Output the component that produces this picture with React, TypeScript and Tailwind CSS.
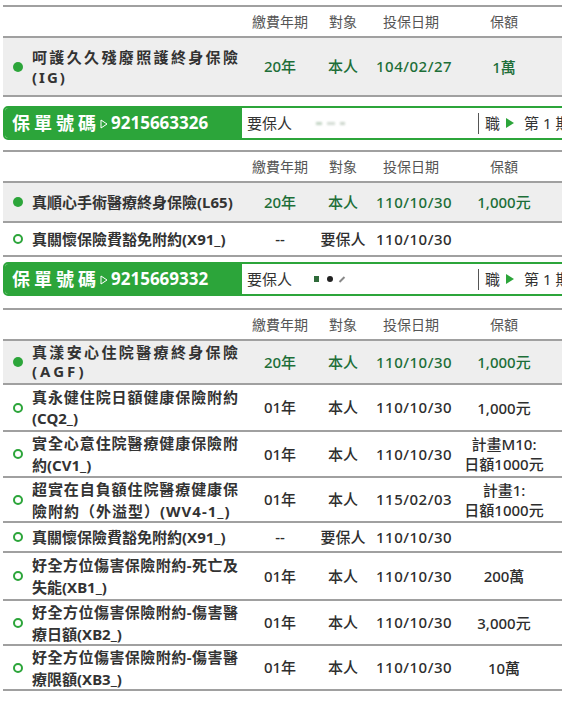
import React from "react";

type Row = {
  name: string | [string, string];
  main?: boolean;
  period: string;
  who: string;
  date: string;
  amount?: React.ReactNode;
  h: string;
  lead?: string;
  l2?: string;
};

const policy1: Row[] = [
  {
    name: ["呵護久久殘廢照護終身保險", "(IG)"],
    main: true,
    period: "20年",
    who: "本人",
    date: "104/02/27",
    amount: "1萬",
    h: "h-[59px]",
    lead: "leading-[20px]",
    l2: "tracking-[2px]",
  },
];

const policy2: Row[] = [
  {
    name: "真順心手術醫療終身保險(L65)",
    main: true,
    period: "20年",
    who: "本人",
    date: "110/10/30",
    amount: "1,000元",
    h: "h-[40px]",
  },
  { name: "真關懷保險費豁免附約(X91_)", period: "--", who: "要保人", date: "110/10/30", h: "h-[34px]" },
];

const policy3: Row[] = [
  {
    name: ["真漾安心住院醫療終身保險", "(AGF)"],
    main: true,
    period: "20年",
    who: "本人",
    date: "110/10/30",
    amount: "1,000元",
    h: "h-[44px]",
    lead: "leading-[19px]",
    l2: "tracking-[3px]",
  },
  {
    name: ["真永健住院日額健康保險附約", "(CQ2_)"],
    period: "01年",
    who: "本人",
    date: "110/10/30",
    amount: "1,000元",
    h: "h-[47px]",
    lead: "leading-[21px]",
  },
  {
    name: ["實全心意住院醫療健康保險附", "約(CV1_)"],
    period: "01年",
    who: "本人",
    date: "110/10/30",
    amount: (
      <>
        計畫M10:
        <br />
        日額1000元
      </>
    ),
    h: "h-[46px]",
    lead: "leading-[22px]",
  },
  {
    name: ["超實在自負額住院醫療健康保", "險附約（外溢型）(WV4-1_)"],
    period: "01年",
    who: "本人",
    date: "115/02/03",
    amount: (
      <>
        計畫1:
        <br />
        日額1000元
      </>
    ),
    h: "h-[45px]",
    lead: "leading-[22px]",
    l2: "tracking-[1px]",
  },
  { name: "真關懷保險費豁免附約(X91_)", period: "--", who: "要保人", date: "110/10/30", h: "h-[30px]" },
  {
    name: ["好全方位傷害保險附約-死亡及", "失能(XB1_)"],
    period: "01年",
    who: "本人",
    date: "110/10/30",
    amount: "200萬",
    h: "h-[48px]",
    lead: "leading-[22px]",
  },
  {
    name: ["好全方位傷害保險附約-傷害醫", "療日額(XB2_)"],
    period: "01年",
    who: "本人",
    date: "110/10/30",
    amount: "3,000元",
    h: "h-[45px]",
    lead: "leading-[22px]",
  },
  {
    name: ["好全方位傷害保險附約-傷害醫", "療限額(XB3_)"],
    period: "01年",
    who: "本人",
    date: "110/10/30",
    amount: "10萬",
    h: "h-[45px]",
    lead: "leading-[22px]",
  },
];

function HeaderRow() {
  return (
    <div className="flex h-[29px] items-center text-[14px] text-[#555]">
      <div className="w-[247px]" />
      <div className="w-[60px] text-center">繳費年期</div>
      <div className="w-[66px] text-center">對象</div>
      <div className="w-[70px] text-center">投保日期</div>
      <div className="w-[116px] text-center">保額</div>
    </div>
  );
}

function TableRow({ r }: { r: Row }) {
  const val = r.main ? "text-[#1d6e38]" : "text-[#2e2e2e]";
  return (
    <div className={`flex items-center border-t-2 border-[#a0a0a0] ${r.h} ${r.main ? "bg-[#eeeeee]" : ""}`}>
      <div className="flex w-[247px] items-center">
        {r.main ? (
          <span className="ml-[10px] size-[10px] shrink-0 rounded-full bg-[#2ca53a]" />
        ) : (
          <span className="ml-[10px] size-[10px] shrink-0 rounded-full border-2 border-[#2ca53a]" />
        )}
        <div className={`ml-[9px] w-[206px] text-[15px] font-bold text-[#333] ${r.lead ?? ""}`}>
          {typeof r.name === "string" ? (
            <div className="whitespace-nowrap">{r.name}</div>
          ) : (
            <>
              <div className="text-justify [text-align-last:justify]">{r.name[0]}</div>
              <div className={`whitespace-nowrap ${r.l2 ?? ""}`}>{r.name[1]}</div>
            </>
          )}
        </div>
      </div>
      <div className={`w-[60px] text-center text-[15px] font-medium ${val}`}>{r.period}</div>
      <div className={`w-[66px] text-center text-[15px] font-medium ${val}`}>{r.who}</div>
      <div className={`w-[70px] text-center text-[15px] font-medium tracking-[0.5px] ${val}`}>{r.date}</div>
      <div className={`w-[116px] text-center text-[15px] font-medium leading-[20px] ${val}`}>{r.amount}</div>
    </div>
  );
}

function Section({ rows }: { rows: Row[] }) {
  return (
    <div className="border-y-2 border-[#a0a0a0]">
      <HeaderRow />
      {rows.map((r, i) => (
        <TableRow key={i} r={r} />
      ))}
    </div>
  );
}

function PolicyBar({ no, dark }: { no: string; dark?: boolean }) {
  return (
    <div className="flex h-[34px] w-[600px] shrink-0 overflow-hidden rounded-[5px] border-2 border-[#2ca53a] bg-white">
      <div className="flex w-[237px] items-center bg-[#2ca53a] pl-[7px] text-white">
        <span className="text-[18px] font-bold tracking-[4px]">保單號碼</span>
        <svg width="8" height="10" viewBox="0 0 8 10" className="mt-[1px]">
          <polygon points="1,1 7,5 1,9" fill="none" stroke="white" strokeWidth="1" />
        </svg>
        <span className="ml-[3px] text-[17px] font-bold">{no}</span>
      </div>
      <div className="flex w-[236px] items-center pl-[5px] text-[15px] text-[#333]">
        <span>要保人</span>
        {dark ? (
          <span className="ml-[22px] flex items-center gap-[8px]">
            <span className="h-[6px] w-[5px] bg-[#2f6b3a] blur-[0.5px]" />
            <span className="h-[6px] w-[6px] rounded-sm bg-[#222] blur-[0.5px]" />
            <span className="h-[7px] w-[2px] rotate-45 bg-[#888] blur-[0.5px]" />
          </span>
        ) : (
          <span className="ml-[24px] flex items-center gap-[5px] opacity-60">
            <span className="h-[3px] w-[6px] bg-[#9bb89d] blur-[1px]" />
            <span className="h-[3px] w-[8px] bg-[#b8c6b9] blur-[1px]" />
            <span className="h-[3px] w-[5px] bg-[#a9baa9] blur-[1px]" />
          </span>
        )}
      </div>
      <div className="my-auto h-[21px] w-px bg-[#555]" />
      <div className="flex items-center whitespace-nowrap pl-[6px] text-[15px] text-[#333]">
        <span>職</span>
        <svg width="9" height="10" viewBox="0 0 9 10" className="ml-[6px]">
          <polygon points="0,0 8,5 0,10" fill="#2ca53a" />
        </svg>
        <span className="ml-[9px]">第 1 期</span>
      </div>
    </div>
  );
}

export default function App() {
  return (
    <div className="h-[716px] w-[562px] overflow-hidden bg-white pl-[3px] pt-[5px] font-[family-name:'Noto_Sans','Noto_Sans_CJK_TC',sans-serif]">
      <Section rows={policy1} />
      <div className="mt-[9px]">
        <PolicyBar no="9215663326" />
      </div>
      <div className="mt-[10px]">
        <Section rows={policy2} />
      </div>
      <div className="mt-[5px]">
        <PolicyBar no="9215669332" dark />
      </div>
      <div className="mt-[12px]">
        <Section rows={policy3} />
      </div>
    </div>
  );
}
